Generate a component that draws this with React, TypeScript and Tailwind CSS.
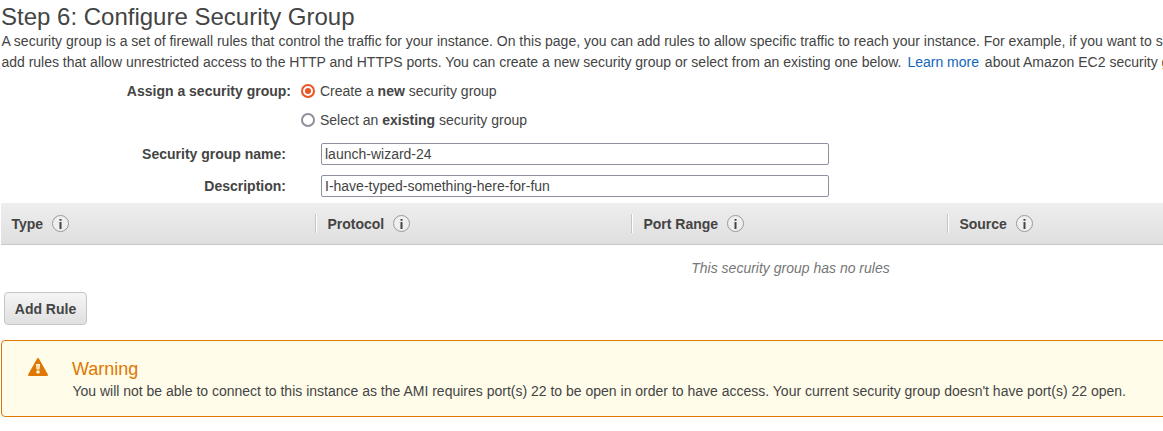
import React from "react";

function InfoIcon() {
  return (
    <svg width="17" height="17" viewBox="0 0 17 17" className="block shrink-0">
      <circle cx="8.500" cy="8.500" r="8" fill="#efefef" stroke="#999" strokeWidth="1" />
      <path d="M7.500 4h2v1.800h-2zM7.500 7h2v7h-2z" fill="#444" />
      <path d="M6.600 7h1v.9h-1z" fill="#aaa" />
    </svg>
  );
}

function WarningIcon() {
  return (
    <svg width="20" height="18" viewBox="0 0 20 18" className="shrink-0">
      <path d="M10 1 19 17H1z" fill="#e07700" stroke="#e07700" strokeWidth="2" strokeLinejoin="round" />
      <path d="M8 6h4l-.5 5.500h-3z" fill="#fffcea" />
      <path d="M9.500 7h1v3.500h-1z" fill="#f3c07c" />
      <rect x="8.400" y="12.400" width="3.200" height="3" rx="1" fill="#fffcea" />
    </svg>
  );
}

function Radio({ checked = false }: { checked?: boolean }) {
  return (
    <svg width="14" height="14" viewBox="0 0 14 14" className="mr-[5px] mt-[3px] shrink-0">
      <circle cx="7" cy="7" r="6" fill="#fff" stroke={checked ? "#e95420" : "#8f8f9d"} strokeWidth="2" />
      {checked && <circle cx="7" cy="7" r="3" fill="#e95420" />}
    </svg>
  );
}

function Field({ label, value }: { label: string; value: string }) {
  return (
    <div className="flex h-[22px] items-center">
      <label className="w-[286px] text-right font-bold leading-[21px]">{label}</label>
      <input
        aria-label={label}
        defaultValue={value}
        className="ml-[35px] h-[22px] w-[508px] rounded-[2px] border border-[#8f8f9d] bg-white px-[3px] outline-none"
      />
    </div>
  );
}

const columns = ["Type", "Protocol", "Port Range", "Source"];

export default function App() {
  return (
    <main className="h-[431px] w-full overflow-hidden bg-white pt-[3px] font-['Liberation_Sans',Arial,sans-serif] text-[14px] leading-[21px] text-[#444]">
      <h1 className="ml-px h-7 text-[24px] leading-[27px]">Step 6: Configure Security Group</h1>
      <p className="ml-[1.4px] whitespace-nowrap">
        A security group is a set of firewall rules that control the traffic for your instance. On this page, you can add
        rules to allow specific traffic to reach your instance. For example, if you want to s
        <br />
        add rules that allow unrestricted access to the HTTP and HTTPS ports. You can create a new security group or
        select from an existing one below.{" "}
        <a href="#" className="mx-[2px] text-[#1166bb]">Learn more</a> about Amazon EC2 security g
      </p>

      <div className="mt-2 flex">
        <div className="w-[291px] text-right font-bold">Assign a security group:</div>
        <div className="ml-[10px] flex flex-col gap-2">
          <div className="flex items-start">
            <Radio checked />
            <span>Create a <b>new</b> security group</span>
          </div>
          <div className="flex items-start">
            <Radio />
            <span>Select an <b>existing</b> security group</span>
          </div>
        </div>
      </div>

      <div className="mt-3 flex flex-col gap-[10px]">
        <Field label="Security group name:" value="launch-wizard-24" />
        <Field label="Description:" value="I-have-typed-something-here-for-fun" />
      </div>

      <div className="ml-px mt-[6px] flex h-[42px] w-[1264px] border-b border-[#c8c8c8] bg-linear-to-b from-[#eeeeee] to-[#dfdfdf]">
        {columns.map((name, i) => (
          <div key={name} className="flex h-full w-[316px] items-start pl-[10.4px]">
            <span className="mt-[11px] font-bold">{name}</span>
            <span className="ml-[9px] mt-3"><InfoIcon /></span>
            {i < columns.length - 1 && (
              <span className="ml-auto mt-[11px] h-[19px] w-[2px] border-l border-r border-l-[#c5c5c5] border-r-white" />
            )}
          </div>
        ))}
      </div>
      <div className="ml-px flex h-[47px] w-[1579px] items-center justify-center italic text-[#777]">
        This security group has no rules
      </div>

      <button className="ml-1 flex h-[33px] w-[83px] items-center justify-center rounded-[4px] border border-[#c5c5c5] bg-linear-to-b from-[#f5f5f5] to-[#e0e0e0] pt-px font-bold">
        Add Rule
      </button>

      <section className="ml-px mt-[15px] flex h-[77px] w-[1200px] rounded-[4px] border border-[#e07700] bg-[#fffcea] pl-[26px] pt-[17px]">
        <WarningIcon />
        <div className="ml-[24px]">
          <h2 className="h-[23px] text-[18px] leading-[22px] text-[#e07700]">Warning</h2>
          <p className="ml-[0.4px] whitespace-nowrap">
            You will not be able to connect to this instance as the AMI requires port(s) 22 to be open in order to have
            access. Your current security group doesn't have port(s) 22 open.
          </p>
        </div>
      </section>
    </main>
  );
}
